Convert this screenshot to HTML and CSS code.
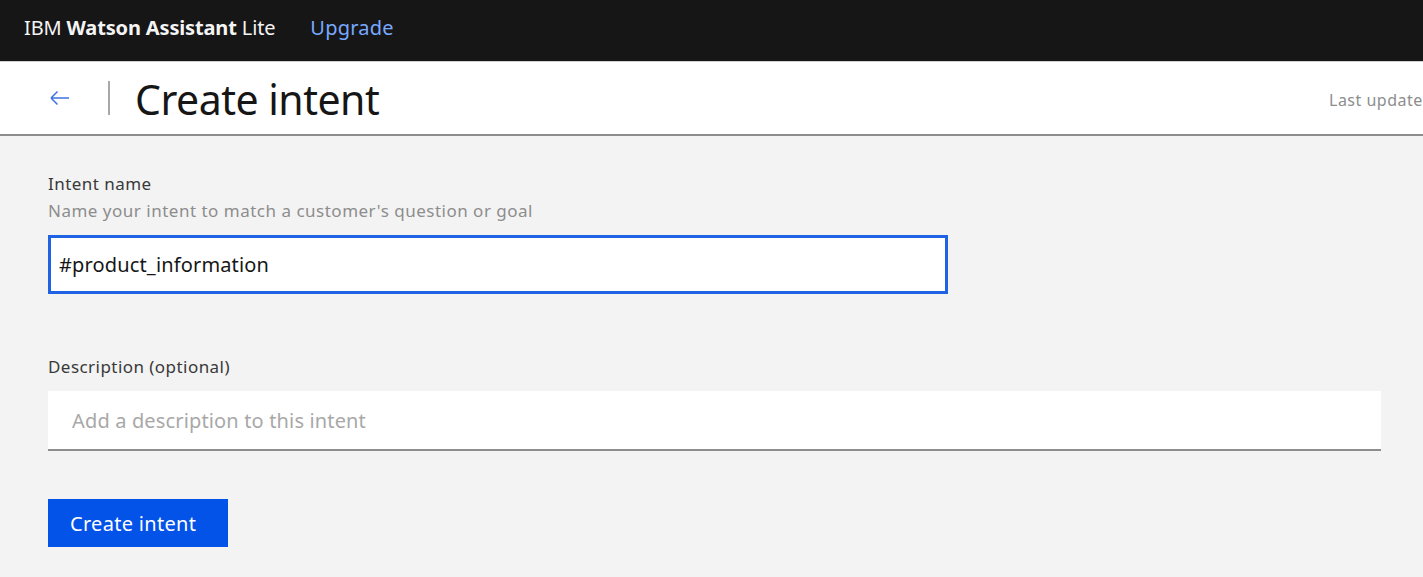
FILE: index.html
```html
<!DOCTYPE html>
<html>
<head>
<meta charset="utf-8">
<link rel="stylesheet" href="styles.css">
</head>
<body>
<header class="topbar">
  <span class="brand">IBM <b>Watson Assistant</b> Lite</span>
  <a class="upgrade">Upgrade</a>
</header>
<div class="pagehead">
  <div class="pagehead-left">
    <span class="back">
      <svg width="24" height="24" viewBox="0 0 24 24"><path d="M3 12H21M3 12L9.5 5.5M3 12L9.5 18.5" stroke="#3d74e0" stroke-width="1.5" fill="none"/></svg>
    </span>
    <span class="sep"></span>
    <h1 class="title">Create intent</h1>
  </div>
  <span class="updated">Last updated</span>
</div>
<main class="content">
  <div class="field">
    <label class="label">Intent name</label>
    <div class="helper">Name your intent to match a customer's question or goal</div>
    <div class="input focused">#product_information</div>
  </div>
  <div class="field desc">
    <label class="label">Description (optional)</label>
    <div class="input textarea"><span class="placeholder">Add a description to this intent</span></div>
  </div>
  <button class="btn">Create intent</button>
</main>
</body>
</html>
```

FILE: styles.css
```css
* { box-sizing: border-box; }
html, body { margin: 0; padding: 0; }
body {
  font-family: "Noto Sans", "Open Sans", sans-serif;
  background: #f3f3f3;
  width: 1423px;
  height: 577px;
  overflow: hidden;
}
.topbar {
  height: 62px;
  background: #161616;
  display: flex;
  align-items: center;
  padding-left: 24px;
  padding-bottom: 6px;
  gap: 35px;
  border-bottom: 1px solid #d0d0d0;
}
.brand {
  color: #f4f4f4;
  font-size: 20px;
  letter-spacing: -0.15px;
}
.brand b { font-weight: 700; }
.upgrade {
  color: #78a9ff;
  font-size: 20px;
  letter-spacing: 0.2px;
}
.pagehead {
  height: 74px;
  background: #fff;
  border-bottom: 2px solid #8d8d8d;
  display: flex;
  align-items: center;
  justify-content: space-between;
  white-space: nowrap;
}
.pagehead-left {
  display: flex;
  align-items: center;
  padding-left: 48px;
}
.back { display: flex; width: 24px; height: 24px; }
.sep {
  width: 2px;
  height: 34px;
  background: #a8a8a8;
  margin-left: 36px;
  margin-right: 25px;
}
.title {
  margin: 0;
  font-size: 41px;
  font-weight: 400;
  color: #161616;
  letter-spacing: -0.5px;
  line-height: 1;
  padding-top: 3px;
}
.updated {
  font-size: 16px;
  letter-spacing: 0.5px;
  color: #8d8d8d;
  margin-right: -30px;
  width: 124px;
  overflow: hidden;
  padding-top: 3px;
}
.content {
  padding: 36px 42px 0 48px;
}
.field { display: flex; flex-direction: column; }
.label {
  font-size: 17px;
  letter-spacing: 0.45px;
  color: #393939;
  line-height: 24px;
}
.helper {
  font-size: 17px;
  letter-spacing: 0.5px;
  color: #8d8d8d;
  line-height: 24px;
  margin-top: 3px;
}
.input {
  background: #fff;
  font-size: 20px;
  letter-spacing: 0.15px;
  color: #161616;
}
.input.focused {
  width: 900px;
  height: 59px;
  margin-top: 12px;
  border: 3px solid #1f63e4;
  display: flex;
  align-items: center;
  padding-left: 8px;
}
.desc { margin-top: 61px; }
.input.textarea {
  height: 60px;
  margin-top: 12px;
  border-bottom: 2px solid #8d8d8d;
  display: flex;
  align-items: center;
  padding-left: 24px;
}
.placeholder { color: #a8a8a8; }
.btn {
  margin-top: 48px;
  width: 180px;
  height: 48px;
  background: #0353e9;
  color: #fff;
  border: none;
  font-family: inherit;
  font-size: 20px;
  letter-spacing: 0.3px;
  text-align: left;
  padding-left: 22px;
}
```
